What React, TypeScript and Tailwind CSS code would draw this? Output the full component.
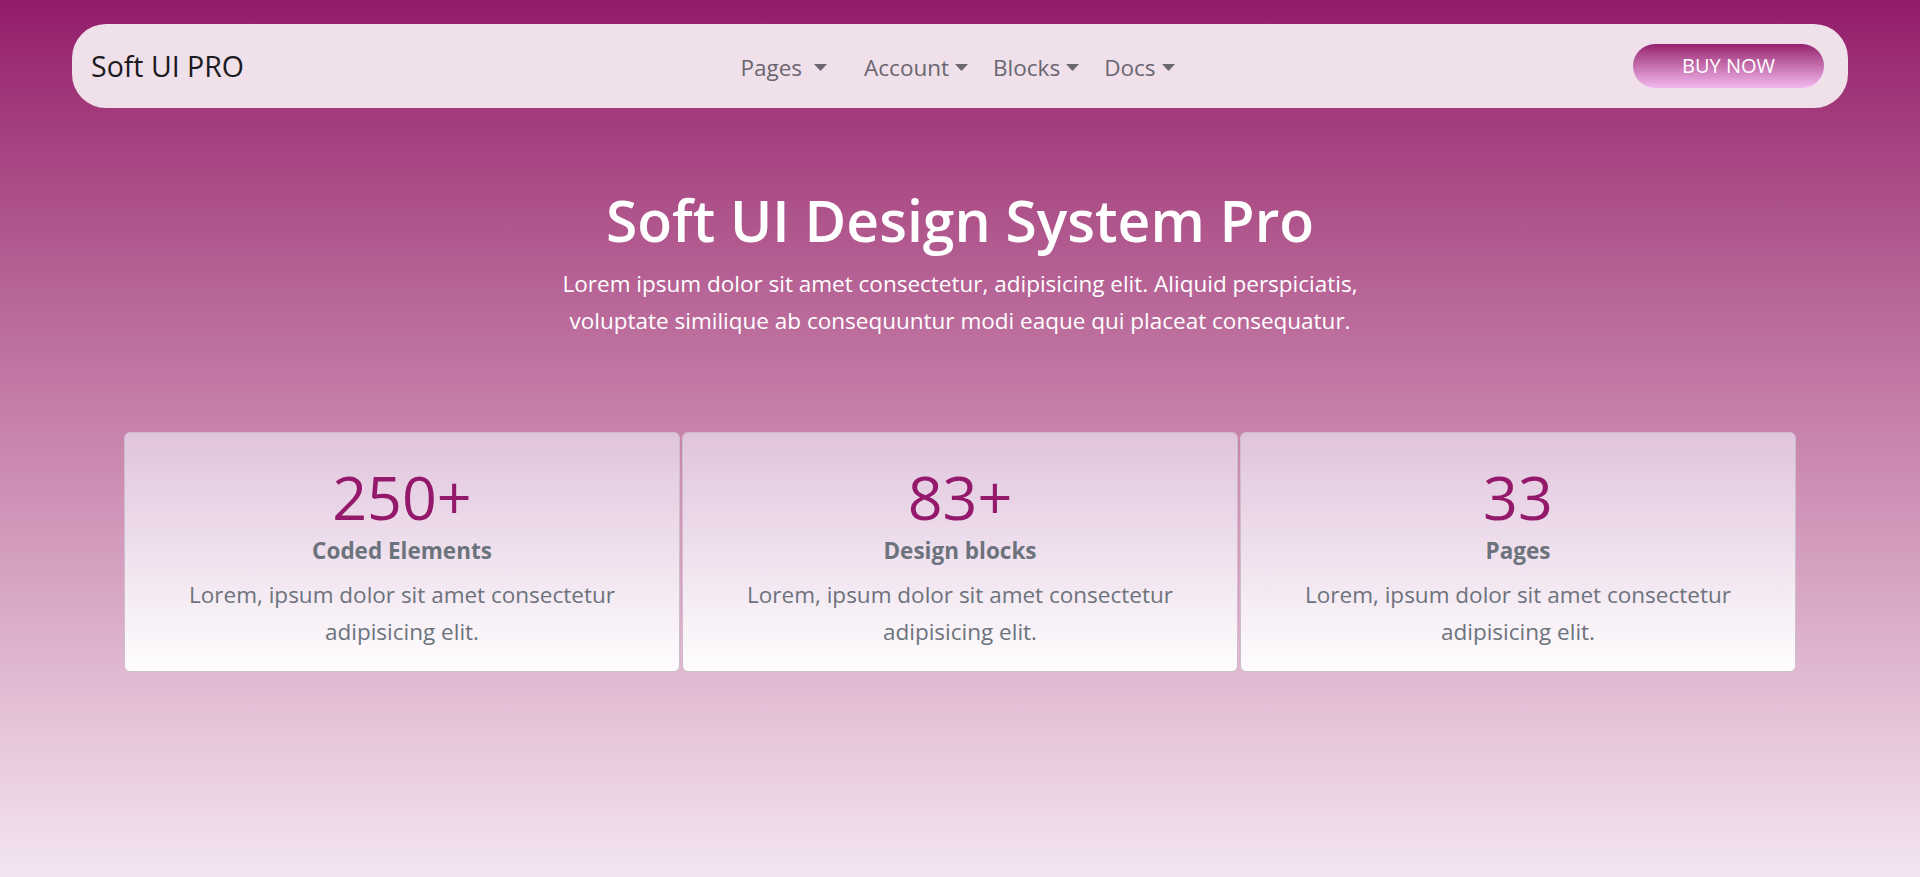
import React from 'react';

const navLinks = [
  { label: 'Pages', extra: true },
  { label: 'Account', extra: false },
  { label: 'Blocks', extra: false },
  { label: 'Docs', extra: false },
];

const stats = [
  { value: '250+', title: 'Coded Elements' },
  { value: '83+', title: 'Design blocks' },
  { value: '33', title: 'Pages' },
];

function Caret() {
  return (
    <svg width="13" height="7" viewBox="0 0 13 7" className="shrink-0">
      <path d="M0 0 H13 L6.5 7 Z" fill="currentColor" />
    </svg>
  );
}

export default function App() {
  return (
    <div className="min-h-[877px] w-full bg-linear-to-b from-[#93196b] to-[#f3e6f2] font-['Open_Sans',sans-serif]">
      {/* Navbar */}
      <div className="px-[72px] pt-6">
        <nav className="grid h-[84px] grid-cols-[1fr_auto_1fr] items-center rounded-[34px] bg-[#efe0ea] pl-[19px] pr-6">
          <a className="justify-self-start text-[28.5px] text-[#1b1a1f]">Soft UI PRO</a>
          <ul className="mt-[3px] flex items-center gap-[25px] text-[22.5px] text-[#6b6670]">
            {navLinks.map((link) => (
              <li key={link.label} className={`flex items-center ${link.extra ? 'mr-3 gap-3' : 'gap-[6px]'}`}>
                <span>{link.label}</span>
                <Caret />
              </li>
            ))}
          </ul>
          <button className="h-[44px] w-[191px] justify-self-end rounded-full bg-linear-to-b from-[#951f70] to-[#f2b9ef] text-[20px] text-white">
            BUY NOW
          </button>
        </nav>
      </div>

      {/* Hero */}
      <div className="mt-[74px] flex flex-col items-center text-center text-white">
        <h1 className="text-[57px] font-semibold leading-[76px]">Soft UI Design System Pro</h1>
        <p className="mt-[7px] text-[22.5px] leading-[37px]">
          Lorem ipsum dolor sit amet consectetur, adipisicing elit. Aliquid perspiciatis,
          <br />
          voluptate similique ab consequuntur modi eaque qui placeat consequatur.
        </p>
      </div>

      {/* Stats */}
      <div className="mx-auto mt-[93px] grid w-[1672px] grid-cols-3 gap-[2px]">
        {stats.map((s) => (
          <div
            key={s.title}
            className="flex h-[240px] flex-col items-center rounded-md border border-[#cdbfca] bg-linear-to-b from-[#e0c4dd] to-[#fefdfe] pt-[33px] text-center"
          >
            <div className="text-[61px] leading-[62px] text-[#95196b]">{s.value}</div>
            <div className="mt-[8px] text-[22.5px] font-bold leading-[30px] text-[#6c737c]">{s.title}</div>
            <p className="mt-[10px] text-[22.5px] leading-[37px] text-[#6c737c]">
              Lorem, ipsum dolor sit amet consectetur
              <br />
              adipisicing elit.
            </p>
          </div>
        ))}
      </div>
    </div>
  );
}
